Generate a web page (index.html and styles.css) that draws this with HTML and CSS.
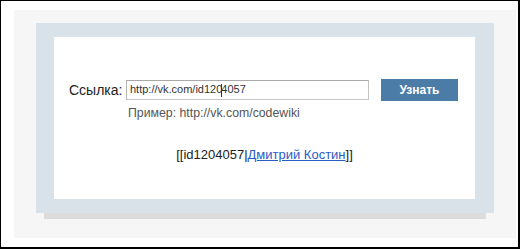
FILE: index.html
```html
<!DOCTYPE html>
<html lang="ru">
<head>
    <meta charset="UTF-8">
    <title>Узнать ID</title>
    <link rel="stylesheet" href="styles.css">
</head>
<body>
    <div class="frame">
        <div class="panel">
            <div class="box">
                <div class="card">
                    <div class="form-row">
                        <label class="label" for="link">Ссылка:</label>
                        <div class="field">
                            <span class="value">http://vk.com/id120<span class="caret"></span>4057</span>
                        </div>
                        <a class="button">Узнать</a>
                    </div>
                    <div class="hint">Пример: http://vk.com/codewiki</div>
                    <div class="result">[[id1204057|<a href="#" class="name">Дмитрий Костин</a>]]</div>
                </div>
            </div>
        </div>
    </div>
</body>
</html>
```

FILE: styles.css
```css
body {
    margin: 0;
    background: white;
    font-family: "Liberation Sans", Arial, sans-serif;
}
.frame {
    box-sizing: border-box;
    width: 520px;
    height: 249px;
    border: solid black;
    border-width: 1px 2px 2px 1px;
    padding: 9px 0 0 13px;
}
.panel {
    width: 480px;
    height: 215px;
    padding: 13px 0 0 22px;
    background: #f6f6f6;
}
.box {
    width: 421px;
    height: 162px;
    padding: 14px 19px 14px 18px;
    background: #d9e2e8;
    box-shadow: 0 14px 0 -8px #dcdcdc;
}
.card {
    height: 162px;
    background: white;
    padding-top: 42px;
    box-sizing: border-box;
}
.form-row {
    display: flex;
    align-items: center;
    height: 22px;
}
.label {
    width: 72px;
    box-sizing: border-box;
    padding-left: 15px;
    font-size: 14px;
    color: #222;
}
.field {
    box-sizing: border-box;
    width: 243px;
    height: 20px;
    border: 1px solid #c4c4c4;
    border-top-color: #a8a8a8;
    border-left-color: #b4b4b4;
    padding: 0 3px;
    display: flex;
    align-items: center;
    font-size: 11px;
    color: #333;
}
.caret {
    display: inline-block;
    width: 1px;
    height: 13px;
    background: #333;
    vertical-align: middle;
    margin: 0 -1px 0 -1px;
}
.button {
    margin-left: 12px;
    width: 77px;
    height: 22px;
    line-height: 22px;
    text-align: center;
    background: #4b7ba7;
    color: white;
    font-weight: bold;
    font-size: 12px;
    cursor: pointer;
}
.hint {
    margin: 5px 0 0 74px;
    font-size: 12.3px;
    color: #555;
}
.result {
    margin-top: 27px;
    text-align: center;
    font-size: 13px;
    color: #222;
}
.name {
    color: #2a5cc4;
}
```
